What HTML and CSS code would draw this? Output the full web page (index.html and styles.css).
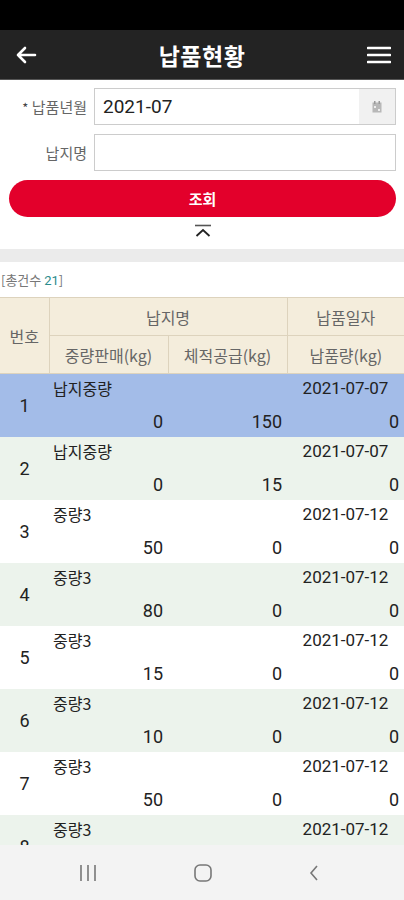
FILE: index.html
```html
<!DOCTYPE html>
<html>
<head>
    <title>납품현황</title>
    <meta charset="UTF-8">
    <meta name="viewport" content="width=device-width, initial-scale=1.0">
    <link rel="stylesheet" href="styles.css">
</head>
<body>
<div class="screen">
    <div class="status-bar"></div>
    <div class="app-header">
        <svg class="back-icon" width="22" height="18" viewBox="0 0 22 18">
            <path d="M20 9H3M10 2L3 9l7 7" fill="none" stroke="#fff" stroke-width="2.6" stroke-linecap="round" stroke-linejoin="round"/>
        </svg>
        <h1>납품현황</h1>
        <svg class="menu-icon" width="24" height="18" viewBox="0 0 24 18">
            <path d="M1 2h22M1 9h22M1 16h22" stroke="#fff" stroke-width="2.6" stroke-linecap="round"/>
        </svg>
    </div>

    <div class="content">
        <div class="search-form">
            <div class="form-row">
                <label><span class="req">*</span> 납품년월</label>
                <div class="field date-field">
                    <span class="value">2021-07</span>
                    <span class="cal-btn">
                        <svg width="10" height="12" viewBox="0 0 10 12">
                            <rect x="0.5" y="1.5" width="9" height="10" fill="#b8b8b8"/>
                            <rect x="2" y="0" width="1.5" height="3" fill="#999"/>
                            <rect x="6.5" y="0" width="1.5" height="3" fill="#999"/>
                            <rect x="2" y="5" width="2" height="2" fill="#eee"/>
                            <rect x="6" y="8" width="2" height="2" fill="#eee"/>
                        </svg>
                    </span>
                </div>
            </div>
            <div class="form-row">
                <label>납지명</label>
                <div class="field"></div>
            </div>
            <button class="search-btn">조회</button>
            <div class="collapse-toggle">
                <svg width="20" height="14" viewBox="0 0 20 14">
                    <path d="M2 1.5h16" stroke="#555" stroke-width="1.6"/>
                    <path d="M3.5 12L10 6l6.5 6" fill="none" stroke="#222" stroke-width="1.8"/>
                </svg>
            </div>
        </div>
        <div class="gap-band"></div>

        <div class="total-count">[총건수 <span class="num">21</span>]</div>

        <table class="list">
            <colgroup>
                <col class="col-no">
                <col class="col-qty">
                <col class="col-qty">
                <col>
            </colgroup>
            <thead>
                <tr>
                    <th rowspan="2">번호</th>
                    <th colspan="2">납지명</th>
                    <th>납품일자</th>
                </tr>
                <tr>
                    <th>중량판매(kg)</th>
                    <th>체적공급(kg)</th>
                    <th>납품량(kg)</th>
                </tr>
            </thead>
            <tbody id="rows"></tbody>
        </table>
    </div>

    <div class="nav-bar">
        <svg width="18" height="18" viewBox="0 0 18 18"><path d="M2 1v16M9 1v16M16 1v16" stroke="#777" stroke-width="1.6"/></svg>
        <svg width="20" height="20" viewBox="0 0 20 20"><rect x="2" y="2" width="16" height="16" rx="5" fill="none" stroke="#777" stroke-width="1.6"/></svg>
        <svg width="12" height="18" viewBox="0 0 12 18"><path d="M9 2L3 9l6 7" fill="none" stroke="#777" stroke-width="1.6"/></svg>
    </div>
</div>

<script>
    const items = [
        ['납지중량', '2021-07-07', 0, 150, 0],
        ['납지중량', '2021-07-07', 0, 15, 0],
        ['중량3', '2021-07-12', 50, 0, 0],
        ['중량3', '2021-07-12', 80, 0, 0],
        ['중량3', '2021-07-12', 15, 0, 0],
        ['중량3', '2021-07-12', 10, 0, 0],
        ['중량3', '2021-07-12', 50, 0, 0],
        ['중량3', '2021-07-12', 30, 0, 0]
    ];
    const tbody = document.getElementById('rows');
    items.forEach(function(item, i) {
        let cls = i === 0 ? 'selected' : (i % 2 === 1 ? 'alt' : '');
        tbody.innerHTML += `
            <tr class="top ${cls}">
                <td class="no" rowspan="2">${i + 1}</td>
                <td class="name" colspan="2">${item[0]}</td>
                <td class="date">${item[1]}</td>
            </tr>
            <tr class="bottom ${cls}">
                <td class="qty">${item[2]}</td>
                <td class="qty">${item[3]}</td>
                <td class="qty">${item[4]}</td>
            </tr>`;
    });
</script>
</body>
</html>
```

FILE: styles.css
```css
body {
    margin: 0;
    padding: 0;
    font-family: Roboto, "Noto Sans CJK KR", sans-serif;
    background-color: #fff;
}
.screen {
    display: flex;
    flex-direction: column;
    height: 100vh;
    overflow: hidden;
}
.status-bar {
    height: 30px;
    background-color: #000;
    flex-shrink: 0;
}
.app-header {
    height: 50px;
    background-color: #232323;
    border-bottom: 1px solid #555;
    display: flex;
    align-items: center;
    justify-content: space-between;
    padding: 0 13px 0 15px;
    flex-shrink: 0;
    box-sizing: border-box;
}
.app-header h1 {
    margin: 0;
    color: #fff;
    font-size: 23px;
    font-weight: bold;
    font-family: "Noto Sans CJK KR", sans-serif;
    letter-spacing: 0.5px;
}
.content {
    flex: 1;
    overflow: hidden;
}
.search-form {
    padding: 8px 8px 0 9px;
}
.form-row {
    display: flex;
    align-items: center;
    margin-bottom: 9px;
}
.form-row label {
    width: 78px;
    text-align: right;
    padding-right: 7px;
    color: #666;
    font-size: 15px;
    font-family: "Noto Sans CJK KR", sans-serif;
}
.req {
    color: #444;
    font-size: 13px;
}
.field {
    flex: 1;
    height: 37px;
    border: 1px solid #ccc;
    box-sizing: border-box;
    display: flex;
    align-items: center;
}
.date-field .value {
    flex: 1;
    padding-left: 8px;
    font-size: 19px;
    color: #222;
}
.cal-btn {
    width: 36px;
    height: 100%;
    background-color: #f1f1f1;
    display: flex;
    align-items: center;
    justify-content: center;
}
.search-btn {
    display: block;
    width: 100%;
    height: 37px;
    margin-top: 1px;
    border: none;
    border-radius: 19px;
    background-color: #e3002b;
    color: #fff;
    font-size: 15px;
    font-weight: bold;
    font-family: "Noto Sans CJK KR", sans-serif;
}
.collapse-toggle {
    height: 32px;
    display: flex;
    justify-content: center;
    padding-top: 7px;
    box-sizing: border-box;
}
.gap-band {
    height: 13px;
    background-color: #ebebeb;
}
.total-count {
    height: 35px;
    line-height: 35px;
    font-size: 13px;
    color: #777;
    padding-left: 1px;
    font-family: "Noto Sans CJK KR", sans-serif;
}
.total-count .num {
    color: #2a8c8c;
    font-family: Roboto, sans-serif;
}
table.list {
    width: 100%;
    border-collapse: collapse;
    table-layout: fixed;
}
.col-no {
    width: 49px;
}
.col-qty {
    width: 119px;
}
.list thead th {
    background-color: #f4eddc;
    border: 1px solid #ddd3bd;
    color: #666;
    font-weight: normal;
    font-size: 16px;
    height: 37px;
    padding: 0;
    font-family: "Noto Sans CJK KR", sans-serif;
}
.list thead th:first-child {
    border-left: none;
}
.list thead th:last-child {
    border-right: none;
}
.list tbody tr.top {
    height: 31px;
}
.list tbody tr.bottom {
    height: 32px;
}
.list tbody td {
    padding: 0 5px;
    line-height: 22px;
    color: #222;
    font-size: 18px;
}
.list tbody tr.selected {
    background-color: #a3bce8;
}
.list tbody tr.alt {
    background-color: #ecf3ec;
}
.list td.no {
    text-align: center;
    vertical-align: middle;
    padding-top: 2px;
}
.list tr.top td.name,
.list tr.top td.date {
    vertical-align: bottom;
    padding-bottom: 6px;
}
.list td.name {
    padding-left: 4px;
    font-size: 16px;
    font-family: "Noto Sans CJK KR", sans-serif;
}
.list td.date {
    text-align: center;
    font-size: 17px;
}
.list td.qty {
    text-align: right;
    vertical-align: top;
    padding-top: 6px;
}
.nav-bar {
    height: 55px;
    background-color: #f3f3f3;
    flex-shrink: 0;
    display: flex;
    justify-content: space-between;
    align-items: center;
    padding: 0 84px 0 79px;
}
```
